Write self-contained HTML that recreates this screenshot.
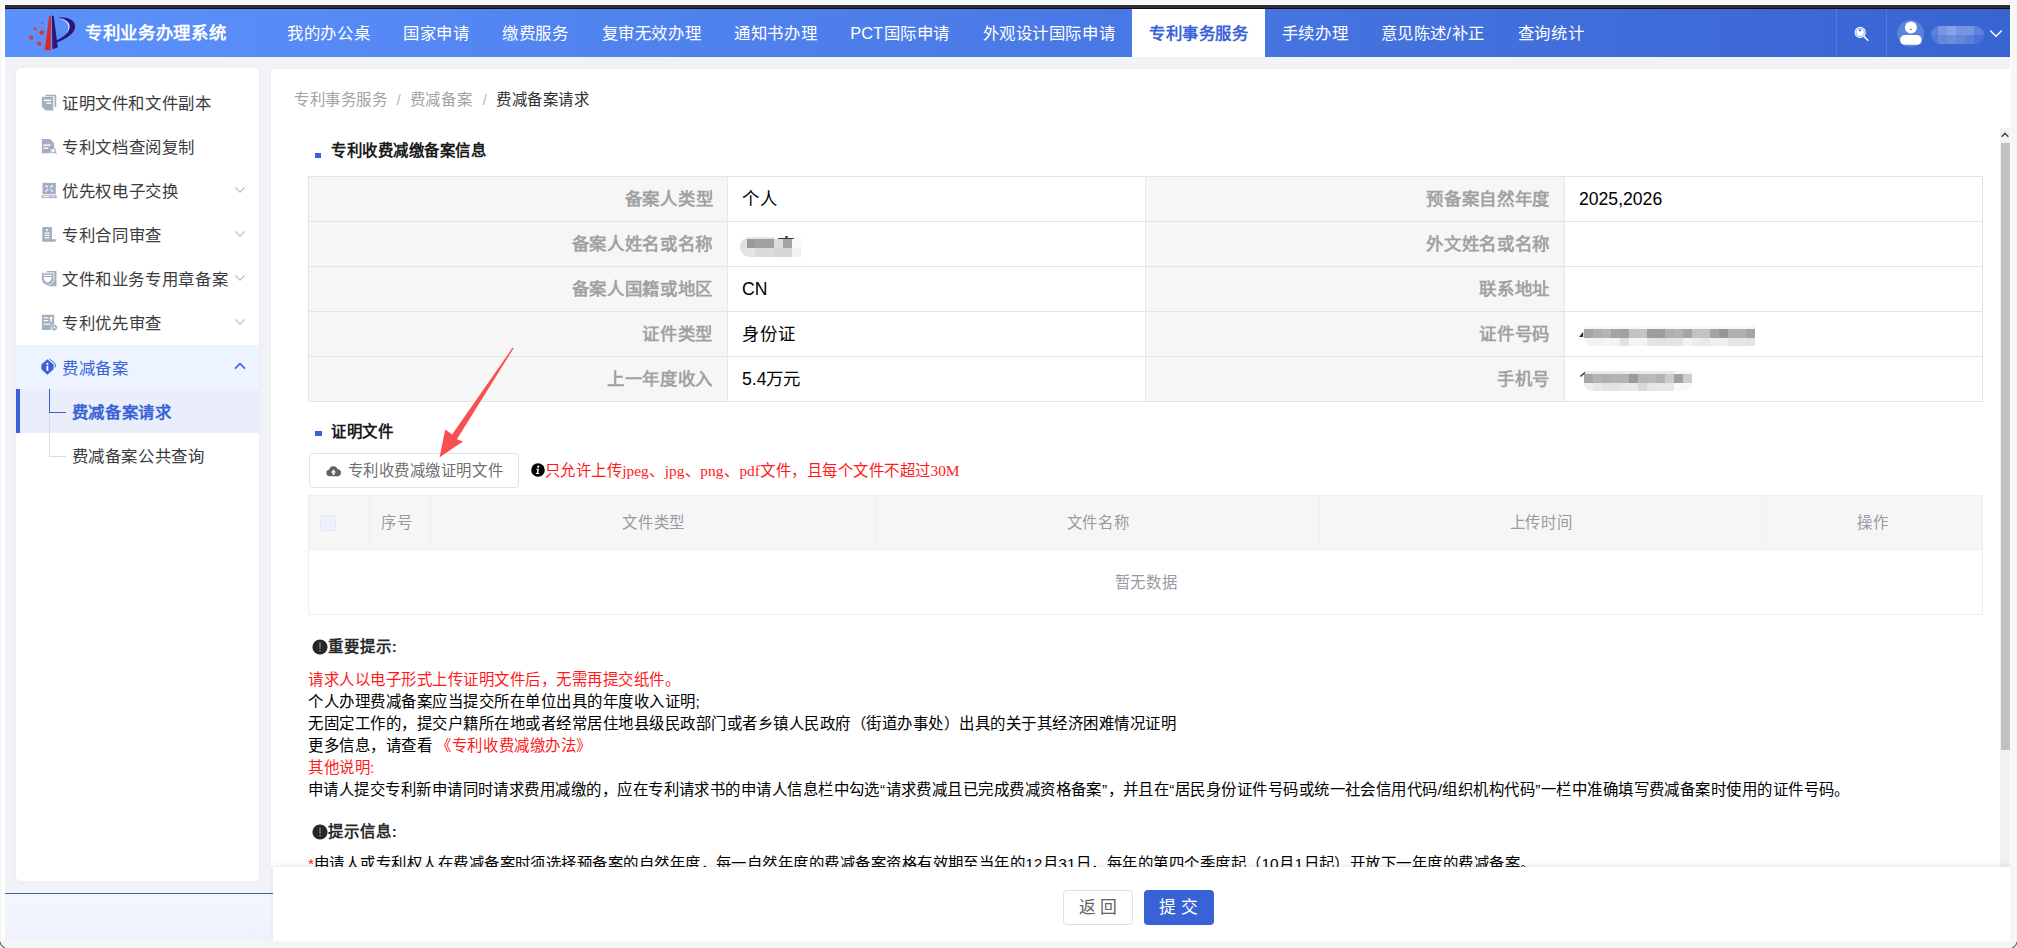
<!DOCTYPE html>
<html lang="zh-CN">
<head>
<meta charset="utf-8">
<title>专利业务办理系统</title>
<style>
*{box-sizing:border-box;margin:0;padding:0}
html,body{width:2017px;height:948px;overflow:hidden;background:#f7f7f7;font-family:"Liberation Sans",sans-serif;color:#000}
.abs{position:absolute}
.j{position:absolute;white-space:nowrap;text-align:justify;text-align-last:justify;overflow:visible}
.l{position:absolute;white-space:nowrap}
.c{position:absolute;white-space:nowrap;text-align:center}
.red{color:#ff1a1a}
</style>
</head>
<body>
<div class="abs" style="left:2px;top:4px;width:2009px;height:937px;background:#fff"></div>
<div class="abs" style="left:5px;top:5px;width:2005px;height:4px;background:linear-gradient(#2c2a35 0,#2c2a35 3px,#120e0a 3px)"></div>
<div class="abs" style="left:5px;top:9px;width:2005px;height:48px;background:linear-gradient(90deg,#5c91fc 0%,#3864d2 100%)"></div>
<div class="abs" style="left:5px;top:57px;width:2005px;height:884px;background:#f2f3f7"></div>
<svg class="abs" style="left:28px;top:14px;filter:blur(.3px)" width="52" height="40" viewBox="28 14 52 40">
<polygon points="49.1,16.2 50.9,16.2 50.7,50.3 44.7,50.3" fill="#e0281c"/>
<polygon points="51.8,15.8 53.7,15.8 57.8,47.6 52.4,49.3" fill="#2a1878"/>
<path d="M58.2,17.4 C66,16.6 75.2,19 75.2,26.4 C75.2,33.6 66,38.6 56.6,42.6 L56.2,40.4 C63.5,37.4 69.6,32.6 69.6,26 C69.6,21 64.5,18.4 58.2,17.4 Z" fill="#2a1878"/>
<path d="M59,18.4 C64.5,19.4 69.4,21.6 69.5,26 C69.6,29 68.4,31.4 66.6,33.4 C68,30.8 68.6,28.6 68.3,26.2 C67.8,22 63.6,19.8 59,18.4 Z" fill="#fff" opacity=".75"/>
<circle cx="42.2" cy="23.1" r="1" fill="#e23a35"/>
<circle cx="35.1" cy="28.7" r="1.5" fill="#e23a35"/>
<g fill="#e3302a">
<polygon transform="translate(41.9,32.6) rotate(-12) scale(3.3)" points="0,-1 0.2939,-0.4045 0.9511,-0.309 0.4755,0.1545 0.5878,0.809 0,0.5 -0.5878,0.809 -0.4755,0.1545 -0.9511,-0.309 -0.2939,-0.4045"/>
<polygon transform="translate(31.4,37.6) rotate(-20) scale(2.8)" points="0,-1 0.2939,-0.4045 0.9511,-0.309 0.4755,0.1545 0.5878,0.809 0,0.5 -0.5878,0.809 -0.4755,0.1545 -0.9511,-0.309 -0.2939,-0.4045"/>
<polygon transform="translate(39.3,43.7) rotate(-8) scale(3)" points="0,-1 0.2939,-0.4045 0.9511,-0.309 0.4755,0.1545 0.5878,0.809 0,0.5 -0.5878,0.809 -0.4755,0.1545 -0.9511,-0.309 -0.2939,-0.4045"/>
</g>
</svg>
<div class="j" style="left:85px;top:23.0px;width:140.8px;font-size:17.4px;line-height:20px;color:#fff;font-weight:bold;">专利业务办理系统</div>
<div class="abs" style="left:1132px;top:9px;width:133px;height:48px;background:#fff"></div>
<div class="j" style="left:287px;top:23.0px;width:82.5px;font-size:16.4px;line-height:20px;color:#fff;">我的办公桌</div>
<div class="j" style="left:403px;top:23.0px;width:66px;font-size:16.4px;line-height:20px;color:#fff;">国家申请</div>
<div class="j" style="left:502px;top:23.0px;width:66px;font-size:16.4px;line-height:20px;color:#fff;">缴费服务</div>
<div class="j" style="left:601.7px;top:23.0px;width:99px;font-size:16.4px;line-height:20px;color:#fff;">复审无效办理</div>
<div class="j" style="left:734px;top:23.0px;width:82.5px;font-size:16.4px;line-height:20px;color:#fff;">通知书办理</div>
<div class="j" style="left:850.3px;top:23.0px;width:99px;font-size:16.4px;line-height:20px;color:#fff;">PCT国际申请</div>
<div class="j" style="left:982.5px;top:23.0px;width:132px;font-size:16.4px;line-height:20px;color:#fff;">外观设计国际申请</div>
<div class="j" style="left:1281.5px;top:23.0px;width:66px;font-size:16.4px;line-height:20px;color:#fff;">手续办理</div>
<div class="j" style="left:1380.5px;top:23.0px;width:103.6px;font-size:16.4px;line-height:20px;color:#fff;">意见陈述/补正</div>
<div class="j" style="left:1517.5px;top:23.0px;width:66px;font-size:16.4px;line-height:20px;color:#fff;">查询统计</div>
<div class="j" style="left:1149px;top:23.0px;width:99px;font-size:16.4px;line-height:20px;color:#3a62d7;font-weight:bold;">专利事务服务</div>
<div class="abs" style="left:1836px;top:9px;width:1px;height:48px;background:rgba(255,255,255,.12)"></div>
<div class="abs" style="left:1886px;top:9px;width:1px;height:48px;background:rgba(255,255,255,.12)"></div>
<svg class="abs" style="left:1853px;top:25px" width="18" height="18" viewBox="0 0 18 18"><circle cx="7.2" cy="7.4" r="5.6" fill="#fff"/><circle cx="7.2" cy="7.4" r="4.2" fill="none" stroke="#5b7fdc" stroke-width=".7"/><circle cx="7" cy="5.3" r="1.1" fill="#3a62d7"/><path d="M11.300 11.700 L14.800 15.200" stroke="#fff" stroke-width="1.500" stroke-linecap="round"/></svg>
<div class="abs" style="left:1897px;top:20px;width:27px;height:27px;border-radius:50%;background:rgba(255,255,255,.18)"></div>
<svg class="abs" style="left:1897px;top:20px" width="27" height="27" viewBox="0 0 27 27"><circle cx="13.900" cy="7.600" r="6" fill="#fff"/><rect x="3.100" y="15" width="21.600" height="9.800" rx="4.700" fill="#fff"/><rect x="12.700" y="8.900" width="2.400" height=".9" fill="#4a6ed6"/></svg>
<div class="abs" style="left:1931px;top:25.500px;width:52.500px;height:18.500px;border-radius:9px;overflow:hidden">
<div class="abs" style="left:0;top:0;width:53px;height:9.500px;background:linear-gradient(90deg,#5b82db 7px,#7a96e2 7px,#7a96e2 16px,#87a3e5 16px,#87a3e5 25px,#7694e1 25px,#7694e1 34px,#7295e0 34px,#7295e0 43px,#5c80db 43px)"></div>
<div class="abs" style="left:0;top:9.500px;width:53px;height:9px;background:linear-gradient(90deg,#4f79da 7px,#6488dc 7px,#6488dc 16px,#6a8ddd 16px,#6a8ddd 25px,#6286dc 25px,#6286dc 34px,#577ed9 34px,#577ed9 43px,#4873d9 43px)"></div>
</div>
<svg class="abs" style="left:1989px;top:29px" width="14" height="9" viewBox="0 0 14 9"><path d="M1.2 1.4 L7 7.2 L12.8 1.4" fill="none" stroke="#fff" stroke-width="1.4"/></svg>
<div class="abs" style="left:16px;top:68px;width:243px;height:813px;background:#fff;border-radius:5px;box-shadow:0 0 6px rgba(0,0,30,.04)"></div>
<div class="abs" style="left:16px;top:345px;width:243px;height:44px;background:#edf4ff"></div>
<div class="abs" style="left:16px;top:389px;width:243px;height:44px;background:#e9eefa"></div>
<div class="abs" style="left:16px;top:389px;width:4px;height:44px;background:#3a62d7"></div>
<div class="abs" style="left:49px;top:389px;width:1px;height:24px;background:#3a62d7"></div>
<div class="abs" style="left:49px;top:412px;width:17px;height:1px;background:#3a62d7"></div>
<div class="abs" style="left:49px;top:413px;width:1px;height:44px;background:#d9dce3"></div>
<div class="abs" style="left:49px;top:456px;width:17px;height:1px;background:#d9dce3"></div>
<svg class="abs" style="left:40.800px;top:94.1px" width="17.200" height="17.200" viewBox="0 0 16 16"><path d="M4 .6h10.2v11.6H12.6V2.2H4z" fill="#a3aec0"/><path d="M.8 2.6h10.6v12.8H4.4L.8 11.8z" fill="#a3aec0"/><rect x="2.6" y="5.2" width="7" height="1.3" fill="#fff"/><rect x="5" y="7.8" width="4.600" height="1.3" fill="#fff"/></svg>
<div class="j" style="left:62px;top:93.0px;width:148.95px;font-size:16.4px;line-height:20px;color:#3a3c40;">证明文件和文件副本</div>
<svg class="abs" style="left:40.800px;top:138.1px" width="17.200" height="17.200" viewBox="0 0 16 16"><path d="M.8 1h7.8l3.600 3.800v6H8.600v3.400H.8z" fill="#a3aec0"/><rect x="2.200" y="6" width="6.600" height="1.3" fill="#fff"/><rect x="2.200" y="8.800" width="4.600" height="1.3" fill="#fff"/><circle cx="11.200" cy="11.600" r="2.100" fill="#fff" stroke="#a3aec0" stroke-width="1"/><path d="M12.800 13.200l1.800 1.800" stroke="#a3aec0" stroke-width="1"/></svg>
<div class="j" style="left:62px;top:137.0px;width:132.4px;font-size:16.4px;line-height:20px;color:#3a3c40;">专利文档查阅复制</div>
<svg class="abs" style="left:40.800px;top:182.1px" width="17.200" height="17.200" viewBox="0 0 16 16"><rect x="1.400" y=".8" width="12.400" height="10.600" fill="#a3aec0"/><path d="M4 3l7 6M11 3l-7 6" stroke="#fff" stroke-width="1.100"/><rect x="6.200" y="4.800" width="2.800" height="2.400" fill="#a3aec0"/><rect x=".6" y="12.400" width="14" height="2.600" fill="#a3aec0"/><rect x="2" y="13.200" width="6" height=".9" fill="#fff"/><rect x="9.400" y="13.200" width="1.400" height=".9" fill="#fff"/><rect x="11.600" y="13.200" width="1.400" height=".9" fill="#fff"/></svg>
<div class="j" style="left:62px;top:181.0px;width:115.85px;font-size:16.4px;line-height:20px;color:#3a3c40;">优先权电子交换</div>
<svg class="abs" style="left:234px;top:185.5px" width="12" height="8" viewBox="0 0 12 8"><path d="M1.200 1.400 6 6.200 10.800 1.400" fill="none" stroke="#b4b9c4" stroke-width="1.100"/></svg>
<svg class="abs" style="left:40.800px;top:226.1px" width="17.200" height="17.200" viewBox="0 0 16 16"><path d="M1.200 1h9v11.400h4v.4c0 1.200-.8 1.800-1.800 1.800H1.200z" fill="#a3aec0"/><circle cx="5.600" cy="3.800" r="1" fill="#fff"/><rect x="3.400" y="6" width="4.600" height="1.100" fill="#fff"/><rect x="3.400" y="8.200" width="4.600" height="1.100" fill="#fff"/><rect x="3.400" y="10.400" width="4.600" height="1.100" fill="#fff"/></svg>
<div class="j" style="left:62px;top:225.0px;width:99.3px;font-size:16.4px;line-height:20px;color:#3a3c40;">专利合同审查</div>
<svg class="abs" style="left:234px;top:229.5px" width="12" height="8" viewBox="0 0 12 8"><path d="M1.200 1.400 6 6.200 10.800 1.400" fill="none" stroke="#b4b9c4" stroke-width="1.100"/></svg>
<svg class="abs" style="left:40.800px;top:270.1px" width="17.200" height="17.200" viewBox="0 0 16 16"><path d="M5.400 1h9v14.200H6v-2z" fill="#a3aec0"/><path d="M.4 2.600h11.600v5.200c0 3.600-2.700 5.800-5.800 6.700C3.100 13.600.4 11.400.4 7.800z" fill="#a3aec0" stroke="#fff" stroke-width=".8"/><path d="M2.400 6.600h7.600c0 2.800-1.700 4.500-3.800 5.300-2.100-.8-3.800-2.500-3.800-5.300z" fill="#fff"/><rect x="2.400" y="4.400" width="7.600" height="1.100" fill="#fff"/></svg>
<div class="j" style="left:62px;top:269.0px;width:165.5px;font-size:16.4px;line-height:20px;color:#3a3c40;">文件和业务专用章备案</div>
<svg class="abs" style="left:234px;top:273.5px" width="12" height="8" viewBox="0 0 12 8"><path d="M1.200 1.400 6 6.200 10.800 1.400" fill="none" stroke="#b4b9c4" stroke-width="1.100"/></svg>
<svg class="abs" style="left:40.800px;top:314.1px" width="17.200" height="17.200" viewBox="0 0 16 16"><path d="M.8.8h11.400v9.200a3.600 3.600 0 0 0-2.800 4.800H.8z" fill="#a3aec0"/><rect x="2.400" y="3" width="4.400" height="1.100" fill="#fff"/><rect x="2.400" y="5.600" width="4.400" height="1.100" fill="#fff"/><rect x="2.400" y="9" width="6.400" height="1.100" fill="#fff"/><path d="M9.400 2.200l1.900 2.200h-1.300v3h-1.200v-3H7.500z" fill="#fff"/><circle cx="12.400" cy="12.600" r="2.900" fill="#a3aec0" stroke="#fff" stroke-width=".5"/><circle cx="12.400" cy="12.600" r=".9" fill="#fff"/></svg>
<div class="j" style="left:62px;top:313.0px;width:99.3px;font-size:16.4px;line-height:20px;color:#3a3c40;">专利优先审查</div>
<svg class="abs" style="left:234px;top:317.5px" width="12" height="8" viewBox="0 0 12 8"><path d="M1.200 1.400 6 6.200 10.800 1.400" fill="none" stroke="#b4b9c4" stroke-width="1.100"/></svg>
<svg class="abs" style="left:41px;top:358px" width="16" height="18" viewBox="0 0 16 18"><path d="M6.400 1.200 12.600 6.600v4.600L6.400 16.800.4 11.200V6.600z" fill="#3a62d7"/><path d="M8.600.8l5.600 5v3.600" fill="none" stroke="#3a62d7" stroke-width="1"/><circle cx="6.400" cy="5.800" r="1.100" fill="#fff"/><rect x="5.500" y="7.800" width="1.800" height="5" fill="#fff"/></svg>
<div class="j" style="left:62px;top:358.0px;width:66.2px;font-size:16.4px;line-height:20px;color:#3a62d7;">费减备案</div>
<svg class="abs" style="left:234px;top:362px" width="12" height="8" viewBox="0 0 12 8"><path d="M1 6.600 6 1.600 11 6.600" fill="none" stroke="#3a62d7" stroke-width="1.500"/></svg>
<div class="j" style="left:71.6px;top:402.0px;width:99.3px;font-size:16.4px;line-height:20px;color:#3a62d7;font-weight:bold;">费减备案请求</div>
<div class="j" style="left:71.6px;top:446.0px;width:132.4px;font-size:16.4px;line-height:20px;color:#3a3c40;">费减备案公共查询</div>
<div class="abs" style="left:5px;top:892.5px;width:268px;height:1.7px;background:#3f5ca0"></div>
<div class="abs" style="left:5px;top:894px;width:268px;height:47px;background:linear-gradient(#f4f6fd,#eff2fd)"></div>
<div class="abs" style="left:271px;top:68.500px;width:1739px;height:798.500px;background:#fff;border-radius:4px 0 0 0;overflow:hidden;box-shadow:0 0 5px rgba(0,0,30,.03)">
<div class="abs" style="left:-271px;top:-68.500px;width:2017px;height:948px">
<div class="j" style="left:294px;top:90.0px;width:93.0px;font-size:15.4px;line-height:20px;color:#a0a3a9;">专利事务服务</div>
<div class="j" style="left:396.5px;top:90.0px;width:4.3px;font-size:15.4px;line-height:20px;color:#b4b7bf;">/</div>
<div class="j" style="left:409.5px;top:90.0px;width:62.0px;font-size:15.4px;line-height:20px;color:#a0a3a9;">费减备案</div>
<div class="j" style="left:482.5px;top:90.0px;width:4.3px;font-size:15.4px;line-height:20px;color:#b4b7bf;">/</div>
<div class="j" style="left:496px;top:90.0px;width:93.0px;font-size:15.4px;line-height:20px;color:#303133;">费减备案请求</div>
<div class="abs" style="left:315px;top:152.5px;width:6px;height:5px;background:#3a62d7"></div>
<div class="j" style="left:331px;top:141.0px;width:155.0px;font-size:15.4px;line-height:20px;color:#1a1a1a;font-weight:bold;">专利收费减缴备案信息</div>
<div class="abs" style="left:308px;top:176px;width:1675px;height:226px;background:#fff;border:1px solid #e4e4e4"></div>
<div class="abs" style="left:309px;top:177px;width:418px;height:224px;background:#f6f6f6"></div>
<div class="abs" style="left:1146px;top:177px;width:418px;height:224px;background:#f6f6f6"></div>
<div class="abs" style="left:727px;top:176px;width:1px;height:225px;background:#e8e8e8"></div>
<div class="abs" style="left:1145px;top:176px;width:1px;height:225px;background:#e8e8e8"></div>
<div class="abs" style="left:1564px;top:176px;width:1px;height:225px;background:#e8e8e8"></div>
<div class="abs" style="left:308px;top:221px;width:1674px;height:1px;background:#e4e4e4"></div>
<div class="abs" style="left:308px;top:266px;width:1674px;height:1px;background:#e4e4e4"></div>
<div class="abs" style="left:308px;top:311px;width:1674px;height:1px;background:#e4e4e4"></div>
<div class="abs" style="left:308px;top:356px;width:1674px;height:1px;background:#e4e4e4"></div>
<div class="j" style="left:624.5px;top:189.0px;width:88.0px;font-size:17.4px;line-height:20px;color:#a1a1a1;font-weight:bold;">备案人类型</div>
<div class="j" style="left:1426.3px;top:189.0px;width:123.2px;font-size:17.4px;line-height:20px;color:#a1a1a1;font-weight:bold;">预备案自然年度</div>
<div class="j" style="left:571.7px;top:234.0px;width:140.8px;font-size:17.4px;line-height:20px;color:#a1a1a1;font-weight:bold;">备案人姓名或名称</div>
<div class="j" style="left:1426.3px;top:234.0px;width:123.2px;font-size:17.4px;line-height:20px;color:#a1a1a1;font-weight:bold;">外文姓名或名称</div>
<div class="j" style="left:571.7px;top:279.0px;width:140.8px;font-size:17.4px;line-height:20px;color:#a1a1a1;font-weight:bold;">备案人国籍或地区</div>
<div class="j" style="left:1479.1px;top:279.0px;width:70.4px;font-size:17.4px;line-height:20px;color:#a1a1a1;font-weight:bold;">联系地址</div>
<div class="j" style="left:642.1px;top:324.0px;width:70.4px;font-size:17.4px;line-height:20px;color:#a1a1a1;font-weight:bold;">证件类型</div>
<div class="j" style="left:1479.1px;top:324.0px;width:70.4px;font-size:17.4px;line-height:20px;color:#a1a1a1;font-weight:bold;">证件号码</div>
<div class="j" style="left:606.9px;top:369.0px;width:105.6px;font-size:17.4px;line-height:20px;color:#a1a1a1;font-weight:bold;">上一年度收入</div>
<div class="j" style="left:1496.7px;top:369.0px;width:52.8px;font-size:17.4px;line-height:20px;color:#a1a1a1;font-weight:bold;">手机号</div>
<div class="j" style="left:742px;top:189.0px;width:35.2px;font-size:17.4px;line-height:20px;color:#000;">个人</div>
<div class="j" style="left:742px;top:324.0px;width:52.8px;font-size:17.4px;line-height:20px;color:#000;">身份证</div>
<div class="l" style="left:742px;top:279px;font-size:17.6px;line-height:20px">CN</div>
<div class="l" style="left:742px;top:369px;font-size:17.6px;line-height:20px">5.4<span style="font-size:17.4px">万元</span></div>
<div class="l" style="left:1579px;top:189px;font-size:17.6px;line-height:20px">2025,2026</div>
<div class="abs" style="left:740px;top:236.500px;width:60.500px;height:20px;border-radius:10px 0 0 10px;overflow:hidden;background:#e4e4e4">
<div class="abs" style="left:0;top:0;width:61px;height:2.600px;background:linear-gradient(90deg,#f6f6f6 6px,#e6e6e6 6px,#e6e6e6 34px,#fafafa 34px)"></div>
<div class="abs" style="left:0;top:2.600px;width:61px;height:8.800px;background:linear-gradient(90deg,#e0e0e0 7px,#999 7px,#999 15.500px,#a2a2a2 15.500px,#a0a0a0 33.500px,#dcdcdc 33.500px,#dcdcdc 42.600px,#a3a3a3 42.600px,#a3a3a3 51.700px,#f8f8f8 51.700px)"></div>
<div class="abs" style="left:0;top:11.400px;width:61px;height:8.800px;background:linear-gradient(90deg,#e4e4e4 15.500px,#dadada 15.500px,#dadada 33.500px,#d6d6d6 33.500px,#d6d6d6 51.700px,#f1f1f1 51.700px)"></div>
</div>
<div class="abs" style="left:777.8px;top:238px;width:16.7px;height:1.2px;background:#3a3a3a;border-radius:1px"></div>
<div class="abs" style="left:785px;top:236.2px;width:2.6px;height:2px;background:#444;border-radius:1px"></div>
<div class="abs" style="left:1581px;top:326px;width:174px;height:19.700px;border-radius:9px 0 0 9px;overflow:hidden">
<div class="abs" style="left:0;top:0;width:174px;height:3.200px;background:#f7f7f7"></div>
</div>
<div class="abs" style="left:1584px;top:329.1px;width:171px;height:8.7px;background:linear-gradient(90deg,#a4a4a4 0px,#a4a4a4 9px,#b0b0b0 9px,#b0b0b0 18px,#b5b5b5 18px,#b5b5b5 27px,#a3a3a3 27px,#a3a3a3 36px,#a0a0a0 36px,#a0a0a0 45px,#c4c4c4 45px,#c4c4c4 54px,#c4c4c4 54px,#c4c4c4 63px,#9c9c9c 63px,#9c9c9c 72px,#9e9e9e 72px,#9e9e9e 81px,#b0b0b0 81px,#b0b0b0 90px,#b4b4b4 90px,#b4b4b4 99px,#a5a5a5 99px,#a5a5a5 108px,#c2c2c2 108px,#c2c2c2 117px,#c3c3c3 117px,#c3c3c3 126px,#a4a4a4 126px,#a4a4a4 135px,#969696 135px,#969696 144px,#b0b0b0 144px,#b0b0b0 153px,#b1b1b1 153px,#b1b1b1 162px,#a5a5a5 162px,#a5a5a5 171px);"></div>
<div class="abs" style="left:1584px;top:337.8px;width:171px;height:7.9px;background:linear-gradient(90deg,#f3f3f3 0px,#f3f3f3 9px,#f2f2f2 9px,#f2f2f2 18px,#f4f4f4 18px,#f4f4f4 27px,#f3f3f3 27px,#f3f3f3 36px,#e2e2e2 36px,#e2e2e2 45px,#f4f4f4 45px,#f4f4f4 54px,#f4f4f4 54px,#f4f4f4 63px,#e4e4e4 63px,#e4e4e4 72px,#e3e3e3 72px,#e3e3e3 81px,#e4e4e4 81px,#e4e4e4 90px,#e5e5e5 90px,#e5e5e5 99px,#f3f3f3 99px,#f3f3f3 108px,#ececec 108px,#ececec 117px,#e8e8e8 117px,#e8e8e8 126px,#f0f0f0 126px,#f0f0f0 135px,#f0f0f0 135px,#f0f0f0 144px,#e6e6e6 144px,#e6e6e6 153px,#e5e5e5 153px,#e5e5e5 162px,#e4e4e4 162px,#e4e4e4 171px);border-radius:0 0 0 8px;"></div>
<svg class="abs" style="left:1578px;top:331px" width="7" height="7" viewBox="0 0 7 7"><path d="M1 6 L5.200 .8 L5.200 6 Z" fill="#2a2a2a"/></svg>
<div class="abs" style="left:1584px;top:371px;width:108px;height:3.4px;background:linear-gradient(90deg,#e9e9e9 90px,#f6f6f6 90px);border-radius:8px 8px 0 0"></div>
<div class="abs" style="left:1584px;top:374.3px;width:108px;height:8.6px;background:linear-gradient(90deg,#a5a5a5 0px,#a5a5a5 9px,#b4b4b4 9px,#b4b4b4 18px,#b0b0b0 18px,#b0b0b0 27px,#b3b3b3 27px,#b3b3b3 36px,#b3b3b3 36px,#b3b3b3 45px,#9a9a9a 45px,#9a9a9a 54px,#b8b8b8 54px,#b8b8b8 63px,#bababa 63px,#bababa 72px,#b2b2b2 72px,#b2b2b2 81px,#cccccc 81px,#cccccc 90px,#a0a0a0 90px,#a0a0a0 99px,#cdcdcd 99px,#cdcdcd 108px);"></div>
<div class="abs" style="left:1584px;top:382.9px;width:108px;height:8px;background:linear-gradient(90deg,#efefef 0px,#efefef 9px,#e8e8e8 9px,#e8e8e8 18px,#e4e4e4 18px,#e4e4e4 27px,#e3e3e3 27px,#e3e3e3 36px,#e8e8e8 36px,#e8e8e8 45px,#e8e8e8 45px,#e8e8e8 54px,#d8d8d8 54px,#d8d8d8 63px,#e6e6e6 63px,#e6e6e6 72px,#e7e7e7 72px,#e7e7e7 81px,#e7e7e7 81px,#e7e7e7 90px,#fafafa 90px,#fafafa 99px,#f8f8f8 99px,#f8f8f8 108px);border-radius:0 0 8px 8px;"></div>
<svg class="abs" style="left:1579px;top:371px" width="8" height="7" viewBox="0 0 8 7"><path d="M1.400 5.600 L6 1.400" stroke="#2a2a2a" stroke-width="1.400"/></svg>
<div class="abs" style="left:314.6px;top:430.5px;width:7px;height:5px;background:#3a62d7"></div>
<div class="j" style="left:331px;top:422.0px;width:62.0px;font-size:15.4px;line-height:20px;color:#1a1a1a;font-weight:bold;">证明文件</div>
<div class="abs" style="left:308.8px;top:453px;width:210px;height:34.6px;border:1px solid #dfe2ea;border-radius:4px;background:#fff"></div>
<svg class="abs" style="left:326px;top:464.500px" width="15" height="12" viewBox="0 0 15 12"><path d="M3.600 11.200a3.200 3.200 0 0 1-.5-6.360 4.400 4.400 0 0 1 8.500-.64 3.500 3.500 0 0 1-.3 7z" fill="#5f6266"/><path d="M7.500 4.400 10.200 7.600H8.400v2.400H6.600V7.600H4.800z" fill="#fff"/></svg>
<div class="j" style="left:347.5px;top:460.5px;width:155.0px;font-size:15.4px;line-height:20px;color:#6e7074;">专利收费减缴证明文件</div>
<svg class="abs" style="left:530.500px;top:463px" width="14" height="14" viewBox="0 0 14 14"><circle cx="7" cy="7" r="6.800" fill="#000"/><circle cx="7.300" cy="3.700" r="1.100" fill="#fff"/><path d="M5.300 5.800h2.800l-.9 4.100h.9v1H4.900v-1h.9l.6-3.100h-1.100z" fill="#fff"/></svg>
<div class="j" style="left:545px;top:461.0px;width:414.5px;font-size:15.4px;line-height:20px;color:#ff1a1a;">只允许上传<span style="font-family:'Liberation Serif',serif">jpeg</span>、<span style="font-family:'Liberation Serif',serif">jpg</span>、<span style="font-family:'Liberation Serif',serif">png</span>、<span style="font-family:'Liberation Serif',serif">pdf</span>文件，且每个文件不超过<span style="font-family:'Liberation Serif',serif">30M</span></div>
<svg class="abs" style="left:430px;top:340px" width="90" height="120" viewBox="430 340 90 120"><polygon points="512.700,347.600 513.600,348.300 456.900,439.200 463,441.400 439.600,457.200 445.200,429.600 452.100,434.500" fill="#f84f50"/></svg>
<div class="abs" style="left:308px;top:495px;width:1675px;height:120px;background:#fff;border:1px solid #ebeef5"></div>
<div class="abs" style="left:309px;top:496px;width:1673px;height:54px;background:#f6f6f7;border-bottom:1px solid #ebeef5"></div>
<div class="abs" style="left:369.4px;top:496px;width:1px;height:53px;background:#eff0f3"></div>
<div class="abs" style="left:430px;top:496px;width:1px;height:53px;background:#eff0f3"></div>
<div class="abs" style="left:875.5px;top:496px;width:1px;height:53px;background:#eff0f3"></div>
<div class="abs" style="left:1318.6px;top:496px;width:1px;height:53px;background:#eff0f3"></div>
<div class="abs" style="left:1761.6px;top:496px;width:1px;height:53px;background:#eff0f3"></div>
<div class="abs" style="left:320.4px;top:515px;width:15.3px;height:15.5px;border:1px solid #e4e9f4;border-radius:3px;background:#edf1fc"></div>
<div class="j" style="left:380.8px;top:513.0px;width:31.0px;font-size:15.4px;line-height:20px;color:#989ba1;">序号</div>
<div class="j" style="left:622.25px;top:513.0px;width:62.0px;font-size:15.4px;line-height:20px;color:#989ba1;">文件类型</div>
<div class="j" style="left:1066.55px;top:513.0px;width:62.0px;font-size:15.4px;line-height:20px;color:#989ba1;">文件名称</div>
<div class="j" style="left:1509.6px;top:513.0px;width:62.0px;font-size:15.4px;line-height:20px;color:#989ba1;">上传时间</div>
<div class="j" style="left:1856.8px;top:513.0px;width:31.0px;font-size:15.4px;line-height:20px;color:#989ba1;">操作</div>
<div class="j" style="left:1114.5px;top:572.5px;width:62.0px;font-size:15.4px;line-height:20px;color:#989ba1;">暂无数据</div>
<svg class="abs" style="left:311.500px;top:639px" width="16" height="16" viewBox="0 0 16 16"><circle cx="8" cy="8" r="7.600" fill="#26272b"/><rect x="7.400" y="3.400" width="1.200" height="6.400" fill="#8f8f8f"/><rect x="7.400" y="11" width="1.200" height="1.300" fill="#9a9a9a"/></svg>
<div class="j" style="left:327.5px;top:637.0px;width:69.5px;font-size:15.4px;line-height:20px;color:#2a2b2e;font-weight:bold;">重要提示:</div>
<div class="j" style="left:308px;top:670.0px;width:372.0px;font-size:15.4px;line-height:20px;color:#ff1a1a;">请求人以电子形式上传证明文件后，无需再提交纸件。</div>
<div class="j" style="left:308px;top:692.0px;width:391.8px;font-size:15.4px;line-height:20px;color:#000;">个人办理费减备案应当提交所在单位出具的年度收入证明;</div>
<div class="j" style="left:308px;top:714.0px;width:868.0px;font-size:15.4px;line-height:20px;color:#000;">无固定工作的，提交户籍所在地或者经常居住地县级民政部门或者乡镇人民政府（街道办事处）出具的关于其经济困难情况证明</div>
<div class="j" style="left:308px;top:736.0px;width:124.0px;font-size:15.4px;line-height:20px;color:#000;">更多信息，请查看</div>
<div class="j" style="left:436.3px;top:736.0px;width:155.0px;font-size:15.4px;line-height:20px;color:#ff1a1a;">《专利收费减缴办法》</div>
<div class="j" style="left:308px;top:758.0px;width:66.3px;font-size:15.4px;line-height:20px;color:#ff1a1a;">其他说明:</div>
<div class="j" style="left:308px;top:780.0px;width:1541.5px;font-size:15.4px;line-height:20px;color:#000;">申请人提交专利新申请同时请求费用减缴的，应在专利请求书的申请人信息栏中勾选“请求费减且已完成费减资格备案”，并且在“居民身份证件号码或统一社会信用代码/组织机构代码”一栏中准确填写费减备案时使用的证件号码。</div>
<svg class="abs" style="left:311.500px;top:824px" width="16" height="16" viewBox="0 0 16 16"><circle cx="8" cy="8" r="7.600" fill="#26272b"/><rect x="7.400" y="3.400" width="1.200" height="6.400" fill="#8f8f8f"/><rect x="7.400" y="11" width="1.200" height="1.300" fill="#9a9a9a"/></svg>
<div class="j" style="left:327.5px;top:822.0px;width:69.5px;font-size:15.4px;line-height:20px;color:#2a2b2e;font-weight:bold;">提示信息:</div>
<div class="l red" style="left:308px;top:854px;font-size:15.4px;line-height:20px">*</div>
<div class="j" style="left:314px;top:854.0px;width:1221px;font-size:15.4px;line-height:20px;color:#000;">申请人或专利权人在费减备案时须选择预备案的自然年度，每一自然年度的费减备案资格有效期至当年的12月31日，每年的第四个季度起（10月1日起）开放下一年度的费减备案。</div>
<div class="abs" style="left:2000px;top:128px;width:10px;height:739px;background:#f1f1f1"></div>
<svg class="abs" style="left:2000px;top:129px" width="10" height="12" viewBox="0 0 10 12"><path d="M1.600 7.800 5 4.400 8.400 7.800" fill="none" stroke="#505050" stroke-width="1.600"/></svg>
<div class="abs" style="left:2000.5px;top:143px;width:9px;height:607px;background:#c1c1c1"></div>
</div></div>
<div class="abs" style="left:273px;top:867px;width:1737px;height:74px;background:#fff;box-shadow:0 -2px 5px rgba(0,0,0,.08)"></div>
<div class="abs" style="left:1063px;top:890px;width:70px;height:35px;border:1px solid #dcdfe6;border-radius:4px;background:#fff"></div>
<div class="c" style="left:1063px;width:70px;top:898px;font-family:'Liberation Serif',serif;font-size:16.8px;line-height:20px;color:#606266">返 回</div>
<div class="abs" style="left:1143.5px;top:890px;width:70px;height:35px;border-radius:4px;background:#3a62d7"></div>
<div class="c" style="left:1143.500px;width:70px;top:898px;font-family:'Liberation Serif',serif;font-size:16.8px;line-height:20px;color:#fff">提 交</div>
<div class="abs" style="left:0px;top:941px;width:2017px;height:7px;background:#f5f5f5"></div>
<svg class="abs" style="left:0;top:940px" width="8" height="8" viewBox="0 0 8 8"><path d="M0 1.800 Q.8 6.600 5 8" stroke="#6e6e6e" stroke-width="1.300" fill="none"/></svg>
<svg class="abs" style="left:2009px;top:940px" width="8" height="8" viewBox="0 0 8 8"><path d="M8 1.800 Q7.200 6.600 3 8" stroke="#6e6e6e" stroke-width="1.300" fill="none"/></svg>
</body>
</html>
